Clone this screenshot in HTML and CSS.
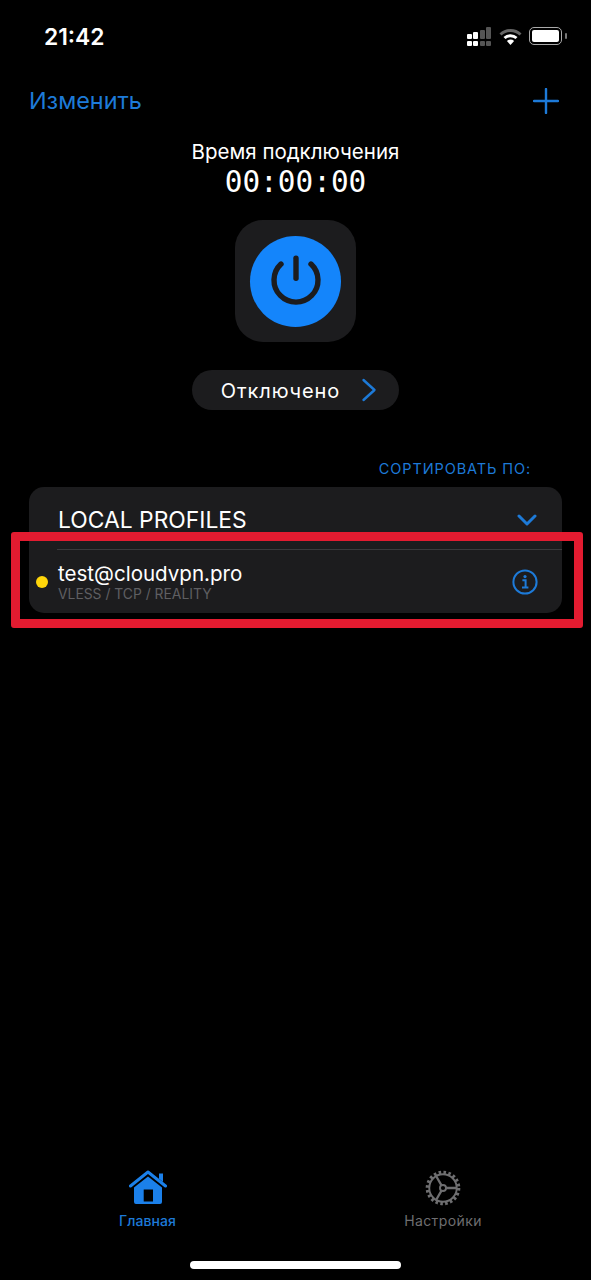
FILE: index.html
```html
<!DOCTYPE html>
<html lang="ru">

<head>
    <meta charset="utf-8">
    <meta name="viewport" content="width=device-width, initial-scale=1.0">
    <title>VPN</title>
    <link rel="stylesheet" href="styles.css">
</head>

<body>
    <div class="phone">
        <header class="statusbar">
            <span class="time">21:42</span>
            <div class="status-icons">
                <svg class="signal" width="24" height="19" viewBox="0 0 24 19">
                    <g fill="#fff">
                        <rect x="0" y="7" width="5" height="5" rx="1"/>
                        <rect x="6" y="5" width="5" height="7" rx="1"/>
                        <rect x="0" y="14" width="5" height="5" rx="1"/>
                        <rect x="6" y="14" width="5" height="5" rx="1"/>
                    </g>
                    <g fill="#555">
                        <rect x="13" y="3" width="5" height="9" rx="1"/>
                        <rect x="19" y="0" width="5" height="12" rx="1"/>
                        <rect x="13" y="14" width="5" height="5" rx="1"/>
                        <rect x="19" y="14" width="5" height="5" rx="1"/>
                    </g>
                </svg>
                <svg class="wifi" width="23" height="17" viewBox="0 0 23 17">
                    <path d="M1.5 6.5a14.5 14.5 0 0 1 20 0" fill="none" stroke="#666" stroke-width="3"/>
                    <path d="M5.5 10a9 9 0 0 1 12 0" fill="none" stroke="#fff" stroke-width="3"/>
                    <path d="M11.5 17l-3.6-4a5.2 5.2 0 0 1 7.2 0z" fill="#fff"/>
                </svg>
                <div class="battery"><div class="battery-fill"></div></div>
                <div class="battery-nub"></div>
            </div>
        </header>

        <nav class="topnav">
            <a class="edit">Изменить</a>
            <svg width="26" height="26" viewBox="0 0 26 26">
                <path d="M13 1v24M1 13h24" stroke="#1d7ad8" stroke-width="2.4" stroke-linecap="round"/>
            </svg>
        </nav>

        <section class="connection">
            <div class="conn-title">Время подключения</div>
            <div class="timer">00:00:00</div>
            <div class="power-card">
                <div class="power-btn">
                    <svg width="52" height="52" viewBox="0 0 52 52">
                        <path d="M11 9a22 22 0 1 0 30 0" fill="none" stroke="#1c1c1e" stroke-width="5.400" stroke-linecap="round"/>
                        <path d="M26 3.300v20" stroke="#1c1c1e" stroke-width="5.400" stroke-linecap="round"/>
                    </svg>
                </div>
            </div>
            <div class="state-pill">
                <span>Отключено</span>
                <svg width="16" height="24" viewBox="0 0 16 24">
                    <path d="M2.500 2l11 10-11 10" fill="none" stroke="#1d7ad8" stroke-width="2.400" stroke-linecap="round" stroke-linejoin="round"/>
                </svg>
            </div>
        </section>

        <div class="sort">СОРТИРОВАТЬ ПО:</div>

        <section class="profiles">
            <div class="group-head">
                <span class="group-name">LOCAL PROFILES</span>
                <svg width="20" height="12" viewBox="0 0 20 12">
                    <path d="M2 2l8 8 8-8" fill="none" stroke="#1d7ad8" stroke-width="3" stroke-linecap="round" stroke-linejoin="round"/>
                </svg>
            </div>
            <div class="profile">
                <span class="dot"></span>
                <div class="profile-text">
                    <div class="profile-name">test@cloudvpn.pro</div>
                    <div class="profile-type">VLESS / TCP / REALITY</div>
                </div>
                <svg class="info" width="26" height="26" viewBox="0 0 26 26">
                    <circle cx="13" cy="13" r="11.600" fill="none" stroke="#1d7ad8" stroke-width="2"/>
                    <circle cx="13" cy="7.600" r="1.600" fill="#1d7ad8"/>
                    <path d="M10.400 11.200h3.200v7M10 18.400h6.400" fill="none" stroke="#1d7ad8" stroke-width="2"/>
                </svg>
            </div>
            <div class="red-mark"></div>
        </section>

        <footer class="tabbar">
            <div class="tab tab-active">
                <svg width="38" height="34" viewBox="0 0 38 34">
                    <path d="M1.500 16L19 2l17.500 14" fill="none" stroke="#1b80ea" stroke-width="3" stroke-linecap="round" stroke-linejoin="round"/>
                    <path d="M30 3.500h4v8.500l-4-3.200z" fill="#1b80ea"/>
                    <path fill-rule="evenodd" fill="#1b80ea" d="M19 6.500L5 17.500V32a2 2 0 0 0 2 2h24a2 2 0 0 0 2-2V17.500zM14.700 19.500H24v12h-9.300z"/>
                </svg>
                <span>Главная</span>
            </div>
            <div class="tab">
                <svg width="36" height="36" viewBox="0 0 38 38">
                    <circle cx="19" cy="19" r="16.500" fill="none" stroke="#6e6e70" stroke-width="3.600" stroke-dasharray="2.700 2.484"/>
                    <circle cx="19" cy="19" r="14.500" fill="none" stroke="#6e6e70" stroke-width="2"/>
                    <circle cx="19" cy="19" r="3.200" fill="none" stroke="#6e6e70" stroke-width="2"/>
                    <path d="M22.200 19H33M17.400 16.200L12 6.800M17.400 21.800L12 31.200" fill="none" stroke="#6e6e70" stroke-width="2.400"/>
                </svg>
                <span>Настройки</span>
            </div>
        </footer>

        <div class="home-bar"></div>
    </div>
</body></html>
```

FILE: styles.css
```css
* {
    box-sizing: border-box;
}

html,
body {
    margin: 0;
    background: #000;
}

body {
    font-family: "Inter", "Liberation Sans", sans-serif;
    color: #fff;
}

.phone {
    display: flex;
    flex-direction: column;
    width: 591px;
    height: 1280px;
    overflow: hidden;
}

/* status bar */
.statusbar {
    display: flex;
    justify-content: space-between;
    align-items: center;
    height: 46px;
    margin-top: 13px;
    padding: 0 24px 0 44px;
}

.time {
    font-size: 22.800px;
    font-weight: 600;
}

.status-icons {
    display: flex;
    align-items: center;
}

.signal {
    margin-right: 8px;
}

.wifi {
    margin-right: 7px;
}

.battery {
    width: 33px;
    height: 18px;
    padding: 2px;
    border: 1.500px solid #aaa;
    border-radius: 5px;
}

.battery-fill {
    height: 100%;
    background: #fff;
    border-radius: 2px;
}

.battery-nub {
    width: 2px;
    height: 6px;
    margin-left: 3px;
    background: #777;
    border-radius: 1px;
}

/* top nav */
.topnav {
    display: flex;
    justify-content: space-between;
    align-items: center;
    height: 30px;
    margin-top: 27px;
    padding: 0 32px 0 29px;
}

.edit {
    padding-bottom: 2px;
    font-size: 23.400px;
    color: #1d7ad8;
}

/* connection block */
.connection {
    display: flex;
    flex-direction: column;
    align-items: center;
    margin-top: 24px;
}

.conn-title {
    font-size: 20.500px;
    line-height: 24px;
}

.timer {
    padding-top: 1px;
    font-family: "DejaVu Sans Mono", monospace;
    font-size: 29.400px;
    line-height: 34px;
}

.power-card {
    display: flex;
    justify-content: center;
    align-items: center;
    width: 121px;
    height: 122px;
    margin-top: 21px;
    background: #1c1c1e;
    border-radius: 28px;
}

.power-btn {
    display: flex;
    justify-content: center;
    align-items: center;
    width: 91px;
    height: 91px;
    background: #1485fb;
    border-radius: 50%;
}

.state-pill {
    display: flex;
    align-items: center;
    gap: 21px;
    height: 40px;
    margin-top: 28px;
    padding: 0 22px 0 29px;
    background: #1c1c1e;
    border-radius: 20px;
}

.state-pill span {
    padding-top: 1px;
    font-size: 20px;
    letter-spacing: 0.900px;
}

/* list */
.sort {
    margin-top: 50px;
    padding-right: 60px;
    font-size: 14.500px;
    line-height: 18px;
    letter-spacing: 0.900px;
    text-align: right;
    color: #1d7ad8;
}

.profiles {
    position: relative;
    width: 533px;
    height: 126px;
    margin: 9px 0 0 29px;
    background: #1c1c1e;
    border-radius: 15px;
}

.group-head {
    display: flex;
    justify-content: space-between;
    align-items: center;
    height: 63px;
    margin-left: 28px;
    padding: 3px 25px 0 1px;
    border-bottom: 1px solid #3a3a3c;
}

.group-name {
    font-size: 22.850px;
}

.profile {
    display: flex;
    align-items: center;
    height: 63px;
    padding: 0 24px 0 7px;
}

.dot {
    width: 12px;
    height: 12px;
    background: #ffd60a;
    border-radius: 50%;
}

.profile-text {
    flex: 1;
    margin-left: 10px;
    padding-top: 2px;
}

.profile-name {
    font-size: 20.550px;
    line-height: 24px;
}

.profile-type {
    font-size: 13.860px;
    line-height: 17px;
    color: #5f5f62;
}

/* red frame drawn over the screenshot */
.red-mark {
    position: absolute;
    top: 45px;
    left: -18px;
    width: 572px;
    height: 96px;
    border: 9.500px solid #e31b30;
    border-radius: 3px;
}

/* tabs */
.tabbar {
    display: flex;
    margin-top: auto;
    padding: 0 0 0 86.500px;
}

.tab {
    display: flex;
    flex-direction: column;
    align-items: center;
    width: 122px;
    font-size: 14px;
    color: #6e6e70;
    letter-spacing: 0.400px;
}

.tab + .tab {
    margin-left: 173.500px;
}

.tab span {
    margin-top: 5px;
    line-height: 20px;
}

.tab-active {
    color: #1d7ad8;
}

.tab-active span {
    font-weight: 500;
    margin-top: 7px;
    letter-spacing: 0.100px;
}

.home-bar {
    width: 211px;
    height: 8px;
    margin: 30px auto 11px;
    background: #fff;
    border-radius: 4px;
}
```
